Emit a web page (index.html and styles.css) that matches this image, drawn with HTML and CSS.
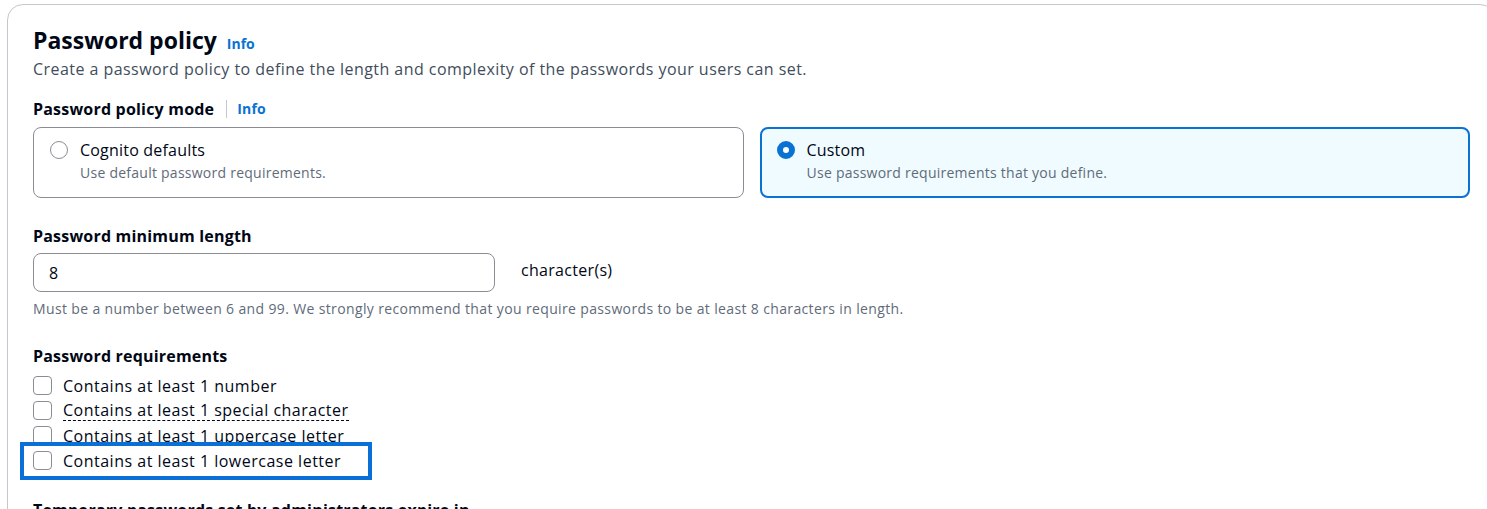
FILE: index.html
```html
<!DOCTYPE html>
<html lang="en">
<head>
<meta charset="utf-8">
<title>Password policy</title>
<link rel="stylesheet" href="styles.css">
</head>
<body>
<div class="card">
  <div class="header">
    <h2 class="title">Password policy</h2>
    <a class="info info-title" href="#">Info</a>
  </div>
  <p class="desc">Create a password policy to define the length and complexity of the passwords your users can set.</p>

  <div class="field-label mode-label">
    <span>Password policy mode</span>
    <span class="sep"></span>
    <a class="info" href="#">Info</a>
  </div>
  <div class="tiles">
    <div class="tile">
      <span class="radio"></span>
      <div class="tile-text">
        <div class="tile-title">Cognito defaults</div>
        <div class="tile-desc">Use default password requirements.</div>
      </div>
    </div>
    <div class="tile selected">
      <span class="radio checked"></span>
      <div class="tile-text">
        <div class="tile-title">Custom</div>
        <div class="tile-desc">Use password requirements that you define.</div>
      </div>
    </div>
  </div>

  <div class="field-label len-label">Password minimum length</div>
  <div class="len-row">
    <div class="input">8</div>
    <span class="unit">character(s)</span>
  </div>
  <p class="help">Must be a number between 6 and 99. We strongly recommend that you require passwords to be at least 8 characters in length.</p>

  <div class="field-label req-label">Password requirements</div>
  <div class="checks">
    <div class="check"><span class="box"></span><span>Contains at least 1 number</span></div>
    <div class="check"><span class="box"></span><span class="dashed">Contains at least 1 special character</span></div>
    <div class="check"><span class="box"></span><span>Contains at least 1 uppercase letter</span></div>
    <div class="check highlighted"><span class="box"></span><span>Contains at least 1 lowercase letter</span><span class="highlight"></span></div>
  </div>

  <div class="field-label temp-label">Temporary passwords set by administrators expire in</div>
</div>
</body>
</html>
```

FILE: styles.css
```css
html, body {
  margin: 0;
  padding: 0;
  background: #ffffff;
  overflow: hidden;
}
body {
  font-family: "Open Sans", "Noto Sans", Arial, sans-serif;
  color: #000716;
  font-size: 16px;
}
.card {
  margin: 4px 0 0 7px;
  width: 1437px;
  padding: 20px 25px 40px 25px;
  border: 1px solid #c6c6cd;
  border-radius: 16px;
}
.header {
  display: flex;
  align-items: baseline;
  height: 30px;
}
.title {
  margin: 0;
  font-size: 23px;
  line-height: 30px;
  font-weight: 700;
  color: #000716;
}
.info {
  color: #0972d3;
  font-size: 14px;
  font-weight: 700;
  text-decoration: none;
}
.info-title {
  margin-left: 10px;
}
.desc {
  margin: 3px 0 0 0;
  font-size: 16px;
  line-height: 22px;
  letter-spacing: 0.45px;
  color: #414d5c;
}
.field-label {
  font-weight: 700;
  font-size: 16px;
  line-height: 22px;
  letter-spacing: 0.2px;
}
.mode-label {
  display: flex;
  align-items: center;
  margin-top: 18px;
}
.sep {
  display: inline-block;
  width: 1px;
  height: 18px;
  background: #c6c6cd;
  margin: 0 10px 0 12px;
}
.tiles {
  display: grid;
  grid-template-columns: 1fr 1fr;
  gap: 16px;
  margin-top: 7px;
}
.tile {
  display: flex;
  align-items: flex-start;
  height: 71px;
  box-sizing: border-box;
  padding: 11px 16px 0 16px;
  border: 1px solid #8c8c94;
  border-radius: 8px;
}
.tile.selected {
  border: 2px solid #0972d3;
  background: #f0fbff;
  padding: 10px 15px 0 15px;
}
.radio {
  flex: none;
  width: 18px;
  height: 18px;
  box-sizing: border-box;
  border: 1.5px solid #8c8c94;
  border-radius: 50%;
  margin-top: 2px;
  background: #fff;
}
.radio.checked {
  border: 6px solid #0972d3;
  background: #fff;
}
.tile-text {
  margin-left: 12px;
}
.tile-title {
  font-size: 16px;
  line-height: 22px;
  letter-spacing: 0.2px;
}
.tile-desc {
  font-size: 14px;
  line-height: 20px;
  margin-top: 2px;
  letter-spacing: 0.25px;
  color: #5f6b7a;
}
.len-label {
  margin-top: 27px;
}
.len-row {
  display: flex;
  align-items: center;
  margin-top: 6px;
}
.input {
  width: 462px;
  height: 39px;
  box-sizing: border-box;
  border: 1px solid #8c8c94;
  border-radius: 8px;
  padding: 0 15px;
  display: flex;
  align-items: center;
  font-size: 16px;
}
.unit {
  margin-left: 26px;
  margin-top: -6px;
  font-size: 16px;
  letter-spacing: 0.3px;
}
.help {
  margin: 6px 0 0 0;
  font-size: 14px;
  line-height: 22px;
  letter-spacing: 0.36px;
  color: #5f6b7a;
}
.req-label {
  margin-top: 25px;
}
.checks {
  margin-top: 6px;
}
.check {
  position: relative;
  display: flex;
  align-items: center;
  height: 25px;
  font-size: 16px;
  letter-spacing: 0.5px;
}
.box {
  flex: none;
  width: 19px;
  height: 19px;
  box-sizing: border-box;
  border: 1.5px solid #8c8c94;
  border-radius: 4px;
  margin-right: 11px;
  background: #fff;
}
.dashed {
  border-bottom: 1px dashed #000716;
  line-height: 20px;
}
.highlight {
  position: absolute;
  left: -13px;
  top: -6px;
  width: 352px;
  height: 38px;
  box-sizing: border-box;
  border: 4px solid #0b6fd8;
  pointer-events: none;
}
.temp-label {
  margin-top: 26px;
}
```
